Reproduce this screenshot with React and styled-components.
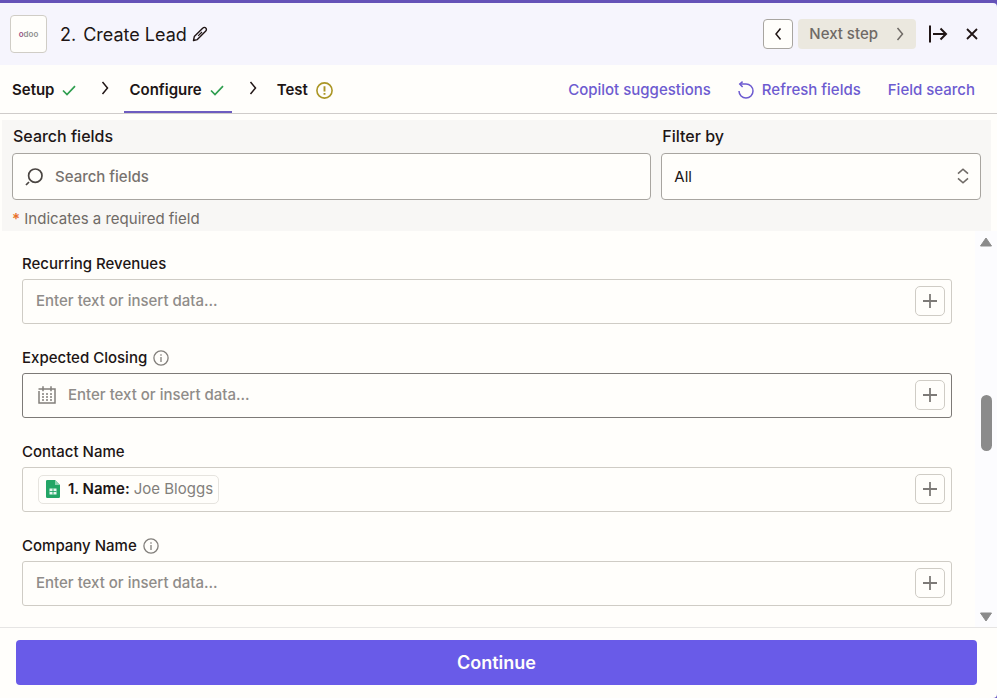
import React from "react";
import styled, { createGlobalStyle } from "styled-components";

const fields = [
  { id: "recurring-revenues", label: "Recurring Revenues" },
  { id: "expected-closing", label: "Expected Closing", info: true, date: true, active: true },
  { id: "contact-name", label: "Contact Name", pill: { name: "1. Name:", value: "Joe Bloggs" } },
  { id: "company-name", label: "Company Name", info: true },
];

export default function App() {
  return (
    <>
      <GlobalStyle />
      <Panel>
        <Header>
          <AppLogo>
            <span>o</span>doo
          </AppLogo>
          <Title>
            <span>2.</span>
            <span>Create Lead</span>
          </Title>
          <IconButton aria-label="Rename step">
            <PencilIcon />
          </IconButton>
          <HeaderActions>
            <PrevButton aria-label="Previous step">
              <Chevron left />
            </PrevButton>
            <NextButton>
              Next step
              <Chevron />
            </NextButton>
            <IconButton $wide aria-label="Collapse panel">
              <CollapseIcon />
            </IconButton>
            <IconButton $wide aria-label="Close">
              <CloseIcon />
            </IconButton>
          </HeaderActions>
        </Header>

        <TabBar>
          <Tabs>
            <Tab href="#setup">
              Setup <CheckIcon />
            </Tab>
            <TabArrow>
              <Chevron />
            </TabArrow>
            <Tab href="#configure" $active>
              Configure <CheckIcon />
            </Tab>
            <TabArrow>
              <Chevron />
            </TabArrow>
            <Tab href="#test">
              Test <WarningIcon />
            </Tab>
          </Tabs>
          <TabActions>
            <TextButton>Copilot suggestions</TextButton>
            <TextButton>
              <RefreshIcon />
              Refresh fields
            </TextButton>
            <TextButton>Field search</TextButton>
          </TabActions>
        </TabBar>

        <FilterPanel>
          <FilterGrid>
            <FilterColumn>
              <FilterLabel htmlFor="search">Search fields</FilterLabel>
              <FilterBox>
                <SearchIcon />
                <SearchInput id="search" type="text" placeholder="Search fields" />
              </FilterBox>
            </FilterColumn>
            <FilterColumn>
              <FilterLabel htmlFor="filter">Filter by</FilterLabel>
              <SelectWrap>
                <Select id="filter" defaultValue="all">
                  <option value="all">All</option>
                </Select>
                <SortIcon />
              </SelectWrap>
            </FilterColumn>
          </FilterGrid>
          <Hint>
            <span>*</span> Indicates a required field
          </Hint>
        </FilterPanel>

        <Body>
          <FieldList>
            {fields.map((field) => (
              <Field key={field.id}>
                <FieldHead>
                  <FieldLabel htmlFor={field.id}>{field.label}</FieldLabel>
                  {field.info && <InfoIcon />}
                </FieldHead>
                <FieldBox $active={field.active}>
                  {field.date && <CalendarIcon />}
                  {field.pill && (
                    <Pill>
                      <SheetIcon />
                      <strong>{field.pill.name}</strong>
                      <span>{field.pill.value}</span>
                    </Pill>
                  )}
                  <FieldInput
                    id={field.id}
                    type="text"
                    placeholder={field.pill ? "" : "Enter text or insert data..."}
                  />
                  <AddButton aria-label={`Insert data into ${field.label}`}>
                    <PlusIcon />
                  </AddButton>
                </FieldBox>
              </Field>
            ))}
          </FieldList>
          <ScrollTrack aria-hidden="true">
            <ScrollArrow />
            <ScrollGap $grow={146} />
            <ScrollThumb />
            <ScrollGap $grow={159} />
            <ScrollArrow down />
          </ScrollTrack>
        </Body>

        <Footer>
          <ContinueButton>Continue</ContinueButton>
        </Footer>
      </Panel>
    </>
  );
}

/* Icons */

const stroke = {
  fill: "none",
  stroke: "currentColor",
  "aria-hidden": true,
};

const Chevron = ({ left }) => (
  <svg width="8" height="14" viewBox="0 0 8 14" strokeWidth="1.5" {...stroke}>
    {left ? <path d="M6.5 1.5 2 7l4.5 5.5" /> : <path d="M1.5 1 6.5 7l-5 6" />}
  </svg>
);

const PencilIcon = () => (
  <svg width="16" height="16" viewBox="0 0 16 16" strokeWidth="1.4" strokeLinejoin="round" {...stroke}>
    <path d="M1.5 14.5 2.3 10.6 10.9 2a2 2 0 0 1 2.9 0 2 2 0 0 1 0 2.9L5.3 13.6z" />
    <path d="M6.2 9.8 10 6" strokeWidth="1.2" />
  </svg>
);

const CollapseIcon = () => (
  <svg width="20" height="18" viewBox="0 0 20 18" strokeWidth="2" {...stroke}>
    <path d="M2 0.5v17M5 9h13M12.5 3.5 18 9l-5.5 5.5" />
  </svg>
);

const CloseIcon = () => (
  <svg width="12" height="12" viewBox="0 0 12 12" strokeWidth="1.8" {...stroke}>
    <path d="M1 1l10 10M11 1 1 11" />
  </svg>
);

const CheckIcon = () => (
  <svg width="14" height="11" viewBox="0 0 14 11" strokeWidth="1.7" fill="none" stroke="#2f9e4f">
    <path d="M1 5.5 5 9.5 13 1.2" />
  </svg>
);

const WarningIcon = () => (
  <svg width="17" height="17" viewBox="0 0 17 17" fill="none" stroke="#ab9625">
    <circle cx="8.5" cy="8.5" r="7.6" strokeWidth="1.6" />
    <path d="M8.5 4.3v5.2M8.5 11v1.8" strokeWidth="1.9" />
  </svg>
);

const RefreshIcon = () => (
  <svg width="16" height="18" viewBox="0 0 16 18" strokeWidth="1.5" {...stroke}>
    <path d="M1 10a7 7 0 1 0 7-7H1.8" />
    <path d="M4.6 0.6 1.8 3l2.8 3" />
  </svg>
);

const SearchIcon = () => (
  <svg width="18" height="18" viewBox="0 0 18 18" strokeWidth="1.7" {...stroke}>
    <circle cx="10.3" cy="7.7" r="6.7" />
    <path d="M1 17l3-3" />
  </svg>
);

const SortIcon = () => (
  <svg width="12" height="16" viewBox="0 0 12 16" strokeWidth="1.6" {...stroke}>
    <path d="M1 5.6 6 1.2l5 4.4M1 10.4l5 4.4 5-4.4" />
  </svg>
);

const InfoIcon = () => (
  <svg width="16" height="16" viewBox="0 0 16 16" fill="none" stroke="#827f7b">
    <circle cx="8" cy="8" r="7.1" strokeWidth="1.3" />
    <path d="M8 7v5M8 4.2v1.5" strokeWidth="1.3" />
  </svg>
);

const CalendarIcon = () => (
  <svg width="18" height="18" viewBox="0 0 18 18" strokeWidth="1.5" {...stroke}>
    <path d="M1 5V17h16V3H0.5M5 0.3v5M13 0.3v5" />
    <path d="M4 8h10M4 11h10M4 14h10" strokeDasharray="2 2" />
  </svg>
);

const PlusIcon = () => (
  <svg width="14" height="14" viewBox="0 0 14 14" strokeWidth="1.8" {...stroke}>
    <path d="M7 0v14M0 7h14" />
  </svg>
);

const SheetIcon = () => (
  <svg width="14" height="18" viewBox="0 0 14 18" aria-hidden="true">
    <path d="M1.3 0H9l5 5v11.7A1.3 1.3 0 0 1 12.7 18H1.3A1.3 1.3 0 0 1 0 16.7V1.3A1.3 1.3 0 0 1 1.3 0z" fill="#23a566" />
    <path d="M9 0l5 5H9z" fill="#8ed1b1" />
    <path d="M3.5 8.5h7v6h-7z" fill="#e9f7f0" />
    <path d="M3.5 11.5h7M7 8.5v6" stroke="#23a566" strokeWidth="0.9" />
  </svg>
);

const ScrollArrow = ({ down }) => (
  <svg width="12" height="10" viewBox="0 0 12 10" fill="#8b8b8b" stroke="#8b8b8b" strokeLinejoin="round">
    {down ? <path d="M.5 1h11L6 9z" /> : <path d="M.5 9h11L6 1z" />}
  </svg>
);

/* Styles */

const GlobalStyle = createGlobalStyle`
  * {
    box-sizing: border-box;
  }

  body {
    margin: 0;
    background: #6a58c4;
    color: #201515;
    font-family: Inter, sans-serif;
    font-size: 15px;
    line-height: 20px;
  }

  button,
  input,
  select {
    font: inherit;
    color: inherit;
  }

  button {
    padding: 0;
    border: none;
    background: none;
    cursor: pointer;
  }

  svg {
    flex: none;
  }
`;

const Panel = styled.main`
  display: flex;
  flex-direction: column;
  height: 100vh;
  border-top: 3px solid #6552b8;
  overflow: hidden;
`;

const Header = styled.header`
  display: flex;
  flex: none;
  align-items: center;
  height: 62px;
  padding: 0 13px 0 10px;
  background: #f6f5fd;
  border-top-right-radius: 4px;
`;

const AppLogo = styled.div`
  display: flex;
  align-items: center;
  justify-content: center;
  width: 37px;
  height: 38px;
  margin-right: 13px;
  border: 1px solid #d0cdc6;
  border-radius: 4px;
  background: #fffefb;
  color: #8f8f8f;
  font-size: 8px;
  font-weight: 600;

  span {
    color: #985184;
  }
`;

const Title = styled.h1`
  display: flex;
  gap: 7px;
  margin: 0 5px 0 0;
  padding-top: 1px;
  font-size: 18px;
  font-weight: 400;
`;

const IconButton = styled.button`
  display: flex;
  align-items: center;
  justify-content: center;
  min-width: ${(props) => (props.$wide ? "24px" : "16px")};
  height: 24px;
`;

const HeaderActions = styled.div`
  display: flex;
  align-items: center;
  gap: 10px;
  margin-left: auto;
`;

const PrevButton = styled.button`
  display: flex;
  align-items: center;
  justify-content: center;
  width: 30px;
  height: 30px;
  margin-right: -5px;
  border: 1px solid #a8a5a0;
  border-radius: 4px;
  background: #fffefb;
`;

const NextButton = styled.button`
  display: flex;
  align-items: center;
  gap: 18px;
  height: 30px;
  padding: 0 12px 0 11px;
  border-radius: 4px;
  background: #ebe8df;
  color: #6f6a66;
  font-weight: 500;
`;

const TabBar = styled.nav`
  display: flex;
  flex: none;
  justify-content: space-between;
  height: 49px;
  padding: 2px 22px 0 7px;
  border-bottom: 1px solid #cfccca;
  background: #fffefb;
`;

const Tabs = styled.div`
  display: flex;
`;

const Tab = styled.a`
  display: flex;
  align-items: center;
  gap: 8px;
  padding: 2px 8px 0 5px;
  border-bottom: 2px solid ${(props) => (props.$active ? "#6d5cc0" : "transparent")};
  color: inherit;
  font-weight: 600;
  text-decoration: none;
`;

const TabArrow = styled.span`
  display: flex;
  align-items: center;
  margin: 0 15px 4px 17px;
`;

const TabActions = styled.div`
  display: flex;
  align-items: center;
  gap: 27px;
`;

const TextButton = styled.button`
  display: flex;
  align-items: center;
  gap: 8px;
  color: #6d5bd0;
  font-weight: 500;
`;

const FilterPanel = styled.section`
  flex: none;
  padding: 6px 10px 2px;
  border: solid #fffefb;
  border-width: 6px 6px 0 2px;
  background: #f8f7f5;
`;

const FilterGrid = styled.div`
  display: grid;
  grid-template-columns: 2fr 1fr;
  gap: 10px;
`;

const FilterColumn = styled.div`
  display: flex;
  flex-direction: column;
  gap: 7px;
`;

const FilterLabel = styled.label`
  padding-left: 1px;
  font-size: 16px;
  font-weight: 500;
`;

const FilterBox = styled.div`
  display: flex;
  align-items: center;
  gap: 12px;
  height: 47px;
  padding: 0 12px;
  border: 1px solid #a8a5a0;
  border-radius: 4px;
  background: #fffefb;
  color: #4a4542;
`;

const SearchInput = styled.input`
  flex: 1;
  min-width: 0;
  padding: 0;
  border: none;
  outline: none;
  background: none;
  font-weight: 500;

  &::placeholder {
    color: #77726e;
    opacity: 1;
  }
`;

const SelectWrap = styled.div`
  position: relative;
  color: #6f6a66;

  svg {
    position: absolute;
    top: 15px;
    right: 12px;
    pointer-events: none;
  }
`;

const Select = styled.select`
  appearance: none;
  width: 100%;
  height: 47px;
  padding: 0 12px;
  border: 1px solid #a8a5a0;
  border-radius: 4px;
  background: #fffefb;
  color: #201515;
`;

const Hint = styled.p`
  margin: 9px 0 0;
  color: #6f6a66;

  span {
    color: #e8702a;
    font-weight: 600;
  }
`;

const Body = styled.section`
  display: flex;
  flex: 1;
  min-height: 0;
  overflow: hidden;
  background: #fffefb;
`;

const FieldList = styled.div`
  display: flex;
  flex: 1;
  flex-direction: column;
  gap: 24px;
  padding: 23px 23px 0 22px;
`;

const Field = styled.div`
  display: flex;
  flex-direction: column;
  gap: 5px;
`;

const FieldHead = styled.div`
  display: flex;
  align-items: center;
  gap: 6px;
`;

const FieldLabel = styled.label`
  font-weight: 500;
`;

const FieldBox = styled.div`
  display: flex;
  align-items: center;
  gap: 12px;
  height: 45px;
  padding: 0 6px 1px 13px;
  border: 1px solid ${(props) => (props.$active ? "#7d7a77" : "#cfccc5")};
  border-radius: 3px;
  color: #827f7b;

  > svg {
    margin-left: 2px;
  }
`;

const FieldInput = styled.input`
  flex: 1;
  min-width: 0;
  padding: 0;
  border: none;
  outline: none;
  background: none;
  font-weight: 500;

  &::placeholder {
    color: #8f8c89;
    opacity: 1;
  }
`;

const Pill = styled.span`
  display: flex;
  align-items: center;
  gap: 4px;
  height: 29px;
  margin-left: 2px;
  padding: 0 5px 0 7px;
  border: 1px solid #e6e4df;
  border-radius: 5px;

  svg {
    margin-right: 4px;
  }

  strong {
    color: #201515;
    font-weight: 600;
  }
`;

const AddButton = styled.button`
  display: flex;
  align-items: center;
  justify-content: center;
  width: 30px;
  height: 30px;
  border: 1px solid #cfccc5;
  border-radius: 5px;
  color: #7d7a77;
`;

const ScrollTrack = styled.div`
  display: flex;
  flex-direction: column;
  align-items: center;
  width: 22px;
  padding: 6px 0 5px;
  background: #fcfcfe;
`;

const ScrollGap = styled.div`
  flex: ${(props) => props.$grow};
`;

const ScrollThumb = styled.div`
  width: 11px;
  height: 56px;
  border-radius: 6px;
  background: #8b8b8b;
`;

const Footer = styled.footer`
  flex: none;
  padding: 12px 20px 13px 16px;
  border-top: 1px solid #e6e5e4;
  border-bottom-right-radius: 4px;
  background: #fffefb;
`;

const ContinueButton = styled.button`
  width: 100%;
  height: 45px;
  border-radius: 4px;
  background: #695be8;
  color: #fffefb;
  font-size: 18px;
  font-weight: 600;
`;
